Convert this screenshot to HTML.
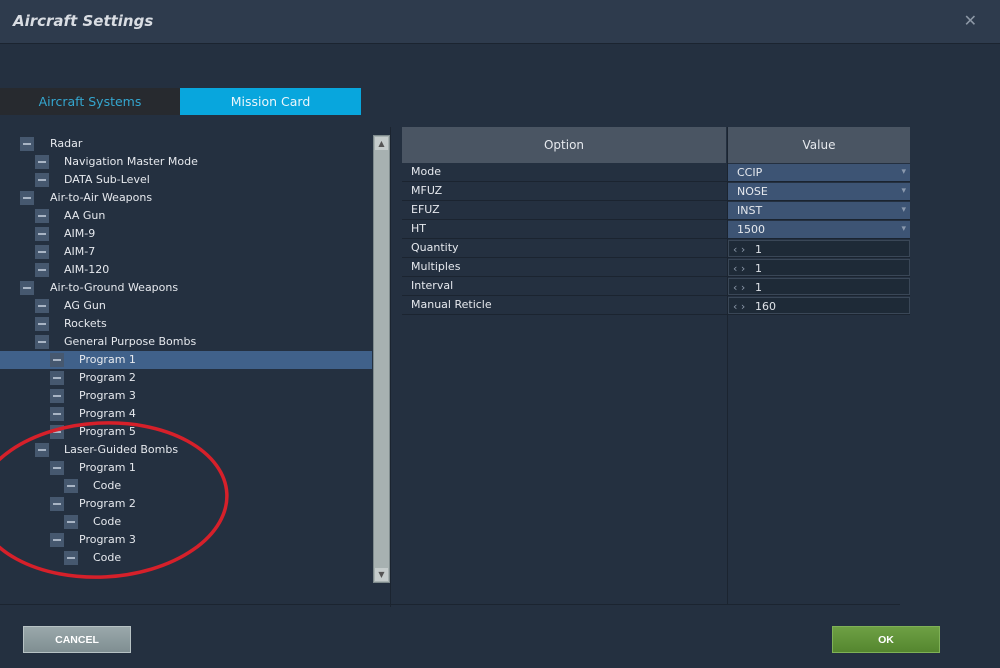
<!DOCTYPE html>
<html><head><style>
*{margin:0;padding:0;box-sizing:border-box}
body{width:1000px;height:668px;background:#243040;font-family:"DejaVu Sans","Liberation Sans",sans-serif;color:#e6e9ee;position:relative;overflow:hidden;font-size:11px}
.hdr{position:absolute;left:0;top:0;width:1000px;height:44px;background:#2e3b4d;border-bottom:1px solid #1b2430}
.hdr h1{position:absolute;left:13px;top:12px;font-size:15px;font-style:italic;font-weight:bold;color:#d9dde3}
.x{position:absolute;right:23px;top:11px;color:#8d98a6;font-size:16px}
.tab{position:absolute;top:88px;height:27px;line-height:27px;text-align:center;font-size:12.5px}
.row{position:absolute;height:18px;line-height:18px;white-space:nowrap}
.bx{position:absolute;width:14px;height:14px;background:#46586f;top:2px}
.bx:after{content:"";position:absolute;left:3px;top:6px;width:8px;height:2px;background:#a8b4c4}
.sel{position:absolute;left:0;top:351px;width:372px;height:18px;background:#40618a}
.sb{position:absolute;left:373px;top:135px;width:17px;height:448px;background:#a7b1b1;border:1px solid #7e8a8c}
.th{position:absolute;top:127px;height:36px;line-height:36px;text-align:center;background:#4a5563;font-size:12px}
.tr{position:absolute;left:402px;width:508px;height:19px;border-bottom:1px solid #1b2430}
.tr span{position:absolute;left:9px;line-height:18px}
.v{position:absolute;left:326px;top:1px;width:182px;height:17px;line-height:17px;padding-left:9px;background:#3d5474}
.v.i{background:#1e2a37;border:1px solid #3a4757;line-height:15px;padding-left:4px;color:#dfe3e8}
.v.d:after{content:"▾";position:absolute;right:4px;top:0;color:#8a99ad;font-size:9px}
.btn{position:absolute;top:626px;width:108px;height:27px;line-height:26px;text-align:center;font-weight:bold;font-size:10.5px;color:#fff;font-family:"Liberation Sans Narrow","Liberation Sans",sans-serif}
</style></head><body>
<div class="hdr"><h1>Aircraft Settings</h1><div class="x">✕</div></div>
<div class="tab" style="left:0;width:180px;background:#272a2f;color:#34a6cf">Aircraft Systems</div>
<div class="tab" style="left:180px;width:181px;background:#08a6dd;color:#eaf6fb">Mission Card</div>
<div class="sel"></div>
<div id="tree"></div>
<div class="sb"><div style="position:absolute;left:1px;top:1px;width:13px;height:13px;background:#c5cccc;font-size:8px;text-align:center;color:#555;line-height:13px">▲</div><div style="position:absolute;left:1px;bottom:1px;width:13px;height:13px;background:#c5cccc;font-size:8px;text-align:center;color:#555;line-height:13px">▼</div></div>
<div style="position:absolute;left:390px;top:127px;width:1px;height:480px;background:#1b2430"></div>
<div style="position:absolute;left:0;top:604px;width:900px;height:1px;background:#1b2430"></div>
<div style="position:absolute;left:727px;top:127px;width:1px;height:477px;background:#1b2430"></div>
<div class="th" style="left:402px;width:324px">Option</div>
<div class="th" style="left:728px;width:182px">Value</div>
<div class="tr" style="top:163px"><span>Mode</span><div class="v d">CCIP</div></div>
<div class="tr" style="top:182px"><span>MFUZ</span><div class="v d">NOSE</div></div>
<div class="tr" style="top:201px"><span>EFUZ</span><div class="v d">INST</div></div>
<div class="tr" style="top:220px"><span>HT</span><div class="v d">1500</div></div>
<div class="tr" style="top:239px"><span>Quantity</span><div class="v i"><span style="left:4px;color:#8a97a8">‹ ›</span><span style="left:26px">1</span></div></div>
<div class="tr" style="top:258px"><span>Multiples</span><div class="v i"><span style="left:4px;color:#8a97a8">‹ ›</span><span style="left:26px">1</span></div></div>
<div class="tr" style="top:277px"><span>Interval</span><div class="v i"><span style="left:4px;color:#8a97a8">‹ ›</span><span style="left:26px">1</span></div></div>
<div class="tr" style="top:296px"><span>Manual Reticle</span><div class="v i"><span style="left:4px;color:#8a97a8">‹ ›</span><span style="left:26px">160</span></div></div>
<div class="btn" style="left:23px;background:linear-gradient(#9aa8ab,#7f8e92);border:1px solid #b7c2c4">CANCEL</div>
<div class="btn" style="left:832px;background:linear-gradient(#6ea044,#55862f);border:1px solid #7fb156">OK</div>
<svg style="position:absolute;left:0;top:0" width="1000" height="668"><ellipse cx="102" cy="500" rx="125" ry="77" fill="none" stroke="#d6202a" stroke-width="3.5" transform="rotate(-3 102 500)"/></svg>
<script>
var items=[[0,"Radar"],[1,"Navigation Master Mode"],[1,"DATA Sub-Level"],[0,"Air-to-Air Weapons"],[1,"AA Gun"],[1,"AIM-9"],[1,"AIM-7"],[1,"AIM-120"],[0,"Air-to-Ground Weapons"],[1,"AG Gun"],[1,"Rockets"],[1,"General Purpose Bombs"],[2,"Program 1"],[2,"Program 2"],[2,"Program 3"],[2,"Program 4"],[2,"Program 5"],[1,"Laser-Guided Bombs"],[2,"Program 1"],[3,"Code"],[2,"Program 2"],[3,"Code"],[2,"Program 3"],[3,"Code"]];
var bx=[20,35,50,64],tx=[50,64,79,93],h="";
items.forEach(function(it,i){var y=135+i*18;h+='<div class="bx" style="left:'+bx[it[0]]+'px;top:'+(y+2)+'px"></div><div class="row" style="left:'+tx[it[0]]+'px;top:'+y+'px">'+it[1]+'</div>';});
document.getElementById("tree").innerHTML=h;
</script>
</body></html>
